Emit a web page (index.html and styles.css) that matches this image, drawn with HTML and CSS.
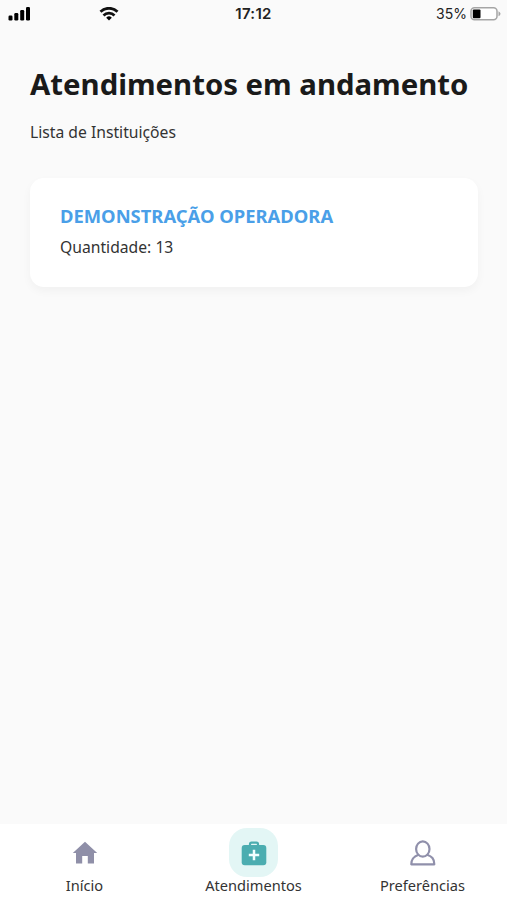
FILE: index.html
```html
<!DOCTYPE html>
<html lang="pt-BR">
<head>
    <meta charset="UTF-8">
    <meta name="viewport" content="width=device-width, initial-scale=1.0">
    <title>Atendimentos em andamento</title>
    <link rel="stylesheet" href="styles.css">
</head>
<body>

    <!-- Barra de status -->
    <header class="status-bar">
        <div class="status-left">
            <svg class="signal" width="22" height="14" viewBox="0 0 22 14">
                <rect x="0.500" y="8.500" width="4" height="5" rx="1.2"/>
                <rect x="6.300" y="6" width="4" height="7.500" rx="1.2"/>
                <rect x="12.200" y="3" width="4" height="10.500" rx="1.2"/>
                <rect x="18" y="0" width="4" height="13.500" rx="1.2"/>
            </svg>
            <svg class="wifi" width="20" height="14" viewBox="0 0 20 14">
                <path d="M1.500 4.800 A12 12 0 0 1 18.500 4.800" fill="none" stroke="#111" stroke-width="2.800"/>
                <path d="M4.500 8.500 A7.500 7.500 0 0 1 15.500 8.500" fill="none" stroke="#111" stroke-width="2.600"/>
                <path d="M10 13.500 L7.200 10.700 A4 4 0 0 1 12.800 10.700 Z"/>
            </svg>
        </div>
        <span class="time">17:12</span>
        <div class="battery">
            <span>35%</span>
            <svg width="31" height="14" viewBox="0 0 31 14">
                <rect x="1" y="0.800" width="26" height="12" rx="3.500" fill="#fff" stroke="#a5a5a5" stroke-width="1.500"/>
                <rect x="2.800" y="2.500" width="7.700" height="8.700" rx="1" fill="#000"/>
                <path d="M28.500 4.300 Q30.500 5.300 30.500 6.800 Q30.500 8.300 28.500 9.300 Z" fill="#a5a5a5"/>
            </svg>
        </div>
    </header>

    <!-- Lista de instituições -->
    <main>
        <h1>Atendimentos em andamento</h1>
        <p class="subtitle">Lista de Instituições</p>

        <section class="card">
            <h2>DEMONSTRAÇÃO OPERADORA</h2>
            <p>Quantidade: 13</p>
        </section>
    </main>

    <!-- Menu inferior -->
    <nav class="tab-bar">
        <a class="tab" href="#inicio">
            <span class="tab-icon">
                <svg width="26" height="24" viewBox="0 0 26 24">
                    <path d="M13 0.800 L25.200 12 H22 V22.500 H15.800 V15 H10.200 V22.500 H4 V12 H0.800 Z" fill="#8f8fa8"/>
                </svg>
            </span>
            <span>Início</span>
        </a>
        <a class="tab active" href="#atendimentos">
            <span class="tab-icon">
                <svg width="26" height="26" viewBox="0 0 26 26">
                    <path d="M9 6 V4.200 Q9 2.700 10.500 2.700 H15.500 Q17 2.700 17 4.200 V6" fill="none" stroke="#4badb0" stroke-width="2.200"/>
                    <rect x="0.700" y="5" width="24.600" height="20.300" rx="3" fill="#4badb0"/>
                    <path d="M13 9.800 V20.200 M7.800 15 H18.200" stroke="#f2ffff" stroke-width="2.500"/>
                </svg>
            </span>
            <span>Atendimentos</span>
        </a>
        <a class="tab" href="#preferencias">
            <span class="tab-icon">
                <svg width="26" height="26" viewBox="0 0 26 26" fill="none" stroke="#9090ab" stroke-width="2.200" stroke-linejoin="round">
                    <ellipse cx="12.800" cy="9" rx="6.700" ry="7.600"/>
                    <path d="M8.500 14.800 C4 16.500 1.300 18.500 1.300 24.300 H24.300 C24.300 18.500 21.800 16.500 17.100 14.800"/>
                </svg>
            </span>
            <span>Preferências</span>
        </a>
    </nav>

</body>
</html>
```

FILE: styles.css
```css
/* Estilos gerais */
* {
    box-sizing: border-box;
}

body {
    font-family: "Noto Sans", sans-serif;
    margin: 0;
    height: 100vh;
    display: flex;
    flex-direction: column;
    background-color: #fafafa;
    color: #333;
}

h1, h2, p {
    margin: 0;
}

svg {
    display: block;
}

/* Barra de status */
.status-bar {
    display: grid;
    grid-template-columns: 1fr auto 1fr;
    align-items: center;
    height: 27px;
    padding: 0 6px 0 8px;
    font-family: Inter, sans-serif;
    font-size: 14px;
    color: #222;
}

.status-left {
    display: flex;
    gap: 69px;
}

.time {
    padding-right: 2px;
    font-size: 15px;
    font-weight: 600;
    letter-spacing: 0.3px;
}

.battery {
    display: flex;
    align-items: center;
    justify-content: flex-end;
    gap: 3px;
}

/* Conteúdo */
main {
    flex: 1;
    padding: 36px 29px 0 30px;
}

h1 {
    font-size: 29.350px;
    line-height: 42px;
    color: #1a1a1a;
    white-space: nowrap;
}

.subtitle {
    margin-top: 16px;
    font-size: 15.700px;
    line-height: 23px;
}

.card {
    height: 109px;
    margin-top: 34px;
    padding: 25px 30px;
    background-color: #fff;
    border-radius: 14px;
    box-shadow: 0 4px 10px rgba(0, 0, 0, 0.04);
}

.card h2 {
    font-size: 18.400px;
    line-height: 26px;
    color: #4a9fe8;
}

.card p {
    margin-top: 5px;
    font-size: 15.700px;
    line-height: 26px;
}

/* Menu inferior */
.tab-bar {
    display: flex;
    height: 76px;
    padding-top: 4px;
    background-color: #fff;
}

.tab {
    flex: 1;
    display: flex;
    flex-direction: column;
    align-items: center;
    font-size: 14.600px;
    line-height: 16px;
    color: #333;
    text-decoration: none;
}

.tab-icon {
    display: flex;
    align-items: center;
    justify-content: center;
    width: 49px;
    height: 49px;
    border-radius: 18px;
}

.active .tab-icon {
    background-color: #e3f6f5;
}
```
